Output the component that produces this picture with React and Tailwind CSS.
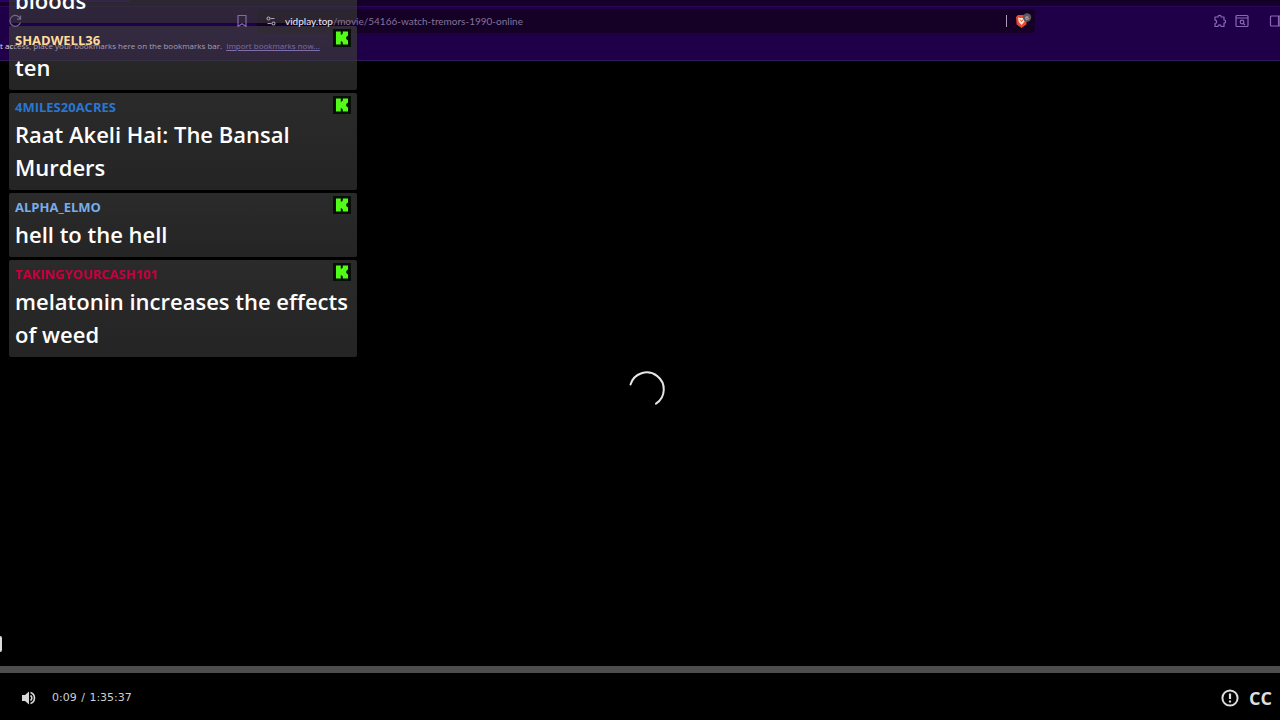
import React from 'react';

const messages = [
  { user: '', text: 'bloods', color: 'text-white' },
  { user: 'SHADWELL36', text: 'ten', color: 'text-[#ffdc9b]' },
  { user: '4MILES20ACRES', text: 'Raat Akeli Hai: The Bansal Murders', color: 'text-[#2877d3]' },
  { user: 'ALPHA_ELMO', text: 'hell to the hell', color: 'text-[#78ade8]' },
  { user: 'TAKINGYOURCASH101', text: 'melatonin increases the effects of weed', color: 'text-[#c4003f]' },
];

const KickBadge = () => (
  <svg viewBox="0 0 18 18" className="size-[18px] shrink-0" role="img" aria-label="Kick">
    <rect width="18" height="18" fill="#071006" />
    <path
      d="M3 2.500h4.800v3.300h.8l1.200-1.300V2.500h5.200v4l-1.800 1.500v2l1.800 1.500v4h-5.200v-2l-1.200-1.300h-.8v3.300H3z"
      fill="#53fc18"
    />
  </svg>
);

const ChatMessage = ({ message }) => (
  <li className="rounded-xs bg-linear-to-b from-[#3d3d3d]/70 to-[#343434]/70 px-1.5 pt-[3px] pb-1.5">
    <div className="flex h-[22px] items-start justify-between">
      <span className={`pt-px text-[13px] leading-5 font-bold ${message.color}`}>{message.user}</span>
      <KickBadge />
    </div>
    <p className="text-[22px] leading-[33px] font-semibold text-white">{message.text}</p>
  </li>
);

/* Reload, address field and extension buttons */
const Toolbar = () => (
  <div className="flex h-7 items-center text-[#8a68b5]">
    <div className="flex w-[257px] shrink-0 items-center justify-between pr-2 pl-2">
      <button type="button" aria-label="Reload" className="relative z-20">
        <svg viewBox="0 0 14 14" className="size-3.5" fill="none" stroke="#75678a" strokeWidth="1.2">
          <path d="M12.300 5A5.400 5.400 0 1 0 12.400 8.500M12.600 1.500V5.200H9" />
        </svg>
      </button>
      <button type="button" aria-label="Bookmark this tab" className="relative z-20">
        <svg viewBox="0 0 14 14" className="size-3.5" fill="none" stroke="#8468a8" strokeWidth="1.2">
          <path d="M3 1.500h8v11L7 9.800 3 12.500z" strokeLinejoin="round" />
        </svg>
      </button>
    </div>
    <div className="flex h-6 min-w-0 flex-1 items-center rounded-sm bg-[#150026] pr-0.5 pl-2">
      <button type="button" aria-label="Site information" className="relative z-20 mr-2">
        <svg viewBox="0 0 12 12" className="size-3" fill="none" stroke="#a99fb8" strokeWidth="1.1">
          <circle cx="3.500" cy="3.500" r="1.500" />
          <path d="M5.500 3.500h4M2.500 8.500h4" />
          <circle cx="8.500" cy="8.500" r="1.500" />
        </svg>
      </button>
      <span className="relative z-20 truncate font-['Lato',sans-serif] text-[10px] leading-4 text-[#84739a]">
        <span className="text-[#f0ebf6]">vidplay.top</span>/movie/54166-watch-tremors-1990-online
      </span>
      <span className="ml-auto h-3 w-px bg-[#a99bb8]" />
      <button type="button" aria-label="Brave Shields" className="ml-2">
        <svg viewBox="0 0 18 16" className="h-4 w-[18px]">
          <path d="M3 2h7l2 2-.7 7.500L6.500 15 1.700 11.500 1 4z" fill="#e84b2c" />
          <path d="M3 4.500l2 .5h3l2-.5-.8 4.500-2.700 3L3.800 9z" fill="#f6e5df" />
          <path d="M5 6.500l1.500 2L8 6.500" fill="none" stroke="#e84b2c" />
          <circle cx="12" cy="4.500" r="4.200" fill="#5b5964" />
          <text x="12" y="6.500" fontSize="6" textAnchor="middle" fill="#e3e0e8">6</text>
        </svg>
      </button>
    </div>
    <div className="flex w-[245px] shrink-0 items-center justify-end gap-2 overflow-hidden">
      <button type="button" aria-label="Extensions">
        <svg viewBox="0 0 14 14" className="size-3.5" fill="none" stroke="currentColor" strokeWidth="1.2">
          <path
            d="M2 3h3a1.600 1.600 0 0 1 3.200 0H11v3a1.600 1.600 0 0 1 0 3.200v3.300H8.200a1.600 1.600 0 0 0-3.200 0H2V9.500a1.700 1.700 0 0 0 0-3.400z"
            strokeLinejoin="round"
          />
        </svg>
      </button>
      <button type="button" aria-label="Search tabs">
        <svg viewBox="0 0 14 14" className="size-3.5" fill="none" stroke="currentColor" strokeWidth="1.200">
          <rect x="1" y="1.500" width="12" height="11" rx="1" />
          <path d="M1 4h12M8.500 9.500l1.500 1.500" />
          <circle cx="7" cy="8" r="1.800" />
        </svg>
      </button>
      <button type="button" aria-label="Sidebar" className="-mr-[3px] ml-3">
        <svg viewBox="0 0 14 14" className="size-3.5" fill="none" stroke="currentColor" strokeWidth="1.2">
          <rect x="1.500" y="2" width="11" height="10" rx="1" />
          <path d="M9.500 2v10M11 2v10" />
        </svg>
      </button>
    </div>
  </div>
);

const BrowserHeader = () => (
  <header className="h-[61px] shrink-0 border-b border-[#32185a] bg-[#1f0048] font-['Open_Sans',sans-serif]">
    <div className="h-[7px] border-b border-[#290755] bg-[#15002a]">
      <div className="h-0.5 w-[130px] bg-[#2b0068]" />
    </div>
    <Toolbar />
    <div className="flex h-[22px] items-center text-[8px] whitespace-nowrap text-[#a79eb6]">
      <span className="relative z-20">
        <span className="text-[#e5e0ec]">t ac</span>cess, place your bookmarks here on the bookmarks bar.{' '}
        <a href="#import" className="ml-0.5 text-[#806da5] underline">Import bookmarks now...</a>
      </span>
    </div>
  </header>
);

const PlayerControls = () => (
  <div>
    <div className="h-[7px] bg-[#4d4d4d]" />
    <div className="flex h-[47px] items-center pt-[3px] pr-2 pl-5">
      <button type="button" aria-label="Mute">
        <svg viewBox="0 0 18 16" className="h-4 w-[18px]" fill="none" stroke="#d8d8d8">
          <path d="M2 5h3l4-3.500v13L5 11H2z" fill="#d8d8d8" stroke="none" />
          <path d="M10.500 5.500a3 3 0 0 1 0 5M10.500 2.500a5.800 5.800 0 0 1 0 11" strokeWidth="1.600" />
        </svg>
      </button>
      <span className="ml-3.5 font-['DejaVu_Sans',sans-serif] text-[11px] text-[#cfcfcf]">
        0:09 <span className="mx-px">/</span> 1:35:37
      </span>
      <button type="button" aria-label="Report a problem" className="ml-auto">
        <svg viewBox="0 0 18 18" className="size-[18px]" fill="none" stroke="#dedede">
          <circle cx="9" cy="9" r="7.600" strokeWidth="2" />
          <path d="M9 4.500v5.500M9 11.500v2" strokeWidth="2.200" />
        </svg>
      </button>
      <button
        type="button"
        className="ml-2.5 font-['Open_Sans',sans-serif] text-lg leading-5 font-bold text-[#dedede]"
      >
        CC
      </button>
    </div>
  </div>
);

const App = () => {
  return (
    <div className="relative flex min-h-screen flex-col overflow-hidden bg-black">
      <BrowserHeader />

      {/* Video area */}
      <main className="flex flex-1 flex-col">
        <div className="relative flex flex-1 items-center justify-center pt-[51px] pl-3.5">
          <svg viewBox="0 0 40 40" className="size-10" fill="none" role="img" aria-label="Loading">
            <path
              d="M3.500 15.500A17 17 0 1 1 29 34.700"
              stroke="#e6e6e6"
              strokeWidth="2"
              strokeLinecap="round"
            />
          </svg>
          <div className="absolute bottom-3.5 left-0 h-4 w-0.5 rounded-r-sm bg-[#dcdcdc]" />
        </div>
        <PlayerControls />
      </main>

      {/* Chat overlay, runs off the top edge */}
      <ul className="absolute -top-[41px] left-[9px] z-10 flex w-[348px] flex-col gap-[3px] font-['Open_Sans','Noto_Sans',sans-serif]">
        {messages.map((message, index) => (
          <ChatMessage key={index} message={message} />
        ))}
      </ul>
    </div>
  );
};

export default App;
